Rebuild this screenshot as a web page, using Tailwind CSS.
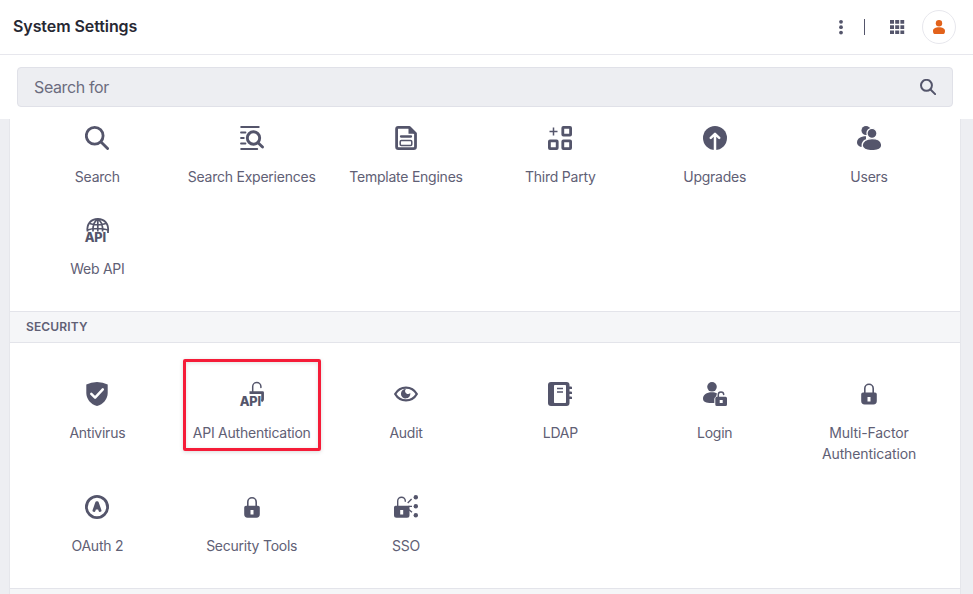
<!DOCTYPE html>
<html lang="en">
<head>
<meta charset="utf-8">
<title>System Settings</title>
<script src="https://cdn.jsdelivr.net/npm/@tailwindcss/browser@4"></script>
</head>
<body class="flex h-[594px] w-[973px] flex-col overflow-hidden bg-white font-['Inter',sans-serif] text-[#54556b]">
<header class="flex h-[55px] shrink-0 items-center border-b border-[#e7e7ed] pr-[17px] pl-[13px]">
  <h1 class="flex-1 pb-[3px] text-[16px] font-semibold tracking-[-0.08px] text-[#272833]">System Settings</h1>
  <svg class="h-4 w-4" viewBox="0 0 16 16" fill="currentColor"><circle cx="8" cy="2.8" r="1.9"/><circle cx="8" cy="8.2" r="1.9"/><circle cx="8" cy="13.6" r="1.9"/></svg>
  <div class="ml-[15px] h-4 w-px bg-[#54556b]"></div>
  <svg class="ml-6 h-4 w-4" viewBox="0 0 16 16" fill="currentColor"><path d="M1 1h4v3.7H1zM6.2 1h4v3.7h-4zM11.4 1h3.8v3.7h-3.8zM1 6.2h4v3.7H1zM6.2 6.2h4v3.7h-4zM11.4 6.2h3.8v3.7h-3.8zM1 11.4h4V15H1zM6.2 11.4h4V15h-4zM11.4 11.4h3.8V15h-3.8z"/></svg>
  <div class="ml-[17px] flex h-[34px] w-[34px] items-center justify-center rounded-full border border-[#e7e7ed]">
    <svg class="h-4 w-4" viewBox="0 0 16 16" fill="#e2621b"><circle cx="8" cy="4.2" r="3.2"/><path d="M2 11.8C2 9.6 4.6 8.2 8 8.2s6 1.4 6 3.6c0 1.8-.4 3.2-1.6 3.2H3.600C2.400 15 2 13.600 2 11.800z"/></svg>
  </div>
</header>
<div class="h-16 shrink-0 px-[17px] pr-5 pt-3">
  <div class="flex h-10 items-center rounded-[4px] border border-[#e0e1e8] bg-[#edeef2] pr-4 pl-4">
    <span class="flex-1 text-[16px] tracking-[-0.38px] text-[#6b6c7e]">Search for</span>
    <svg class="h-4 w-4" viewBox="0 0 24 24" fill="none" stroke="currentColor" stroke-width="3" stroke-linecap="round"><circle cx="9.700" cy="9.500" r="8.200"/><path d="M15.700 15.700l7 7"/></svg>
  </div>
</div>
<main class="flex min-h-0 flex-1 bg-[#edeef2] pr-3 pl-[9px]">
  <div class="w-[952px] shrink-0 border-x border-[#e5e6eb] bg-white text-[14px] leading-[21px] tracking-[-0.24px] text-[#5f6075]">
    <section class="grid h-[192px] grid-cols-6 content-start gap-y-[31px] pr-[13.8px] pl-[10.2px] pt-[7px] text-center">
      <div class="flex flex-col items-center gap-4">
        <svg class="h-6 w-6 text-[#54556b]" viewBox="0 0 24 24" fill="none" stroke="currentColor" stroke-width="2.800" stroke-linecap="round"><circle cx="9.700" cy="9.800" r="8.400"/><path d="M16 16l6.600 6.600"/></svg>
        <span>Search</span>
      </div>
      <div class="flex flex-col items-center gap-4">
        <svg class="h-6 w-6 text-[#54556b]" viewBox="0 0 24 24" fill="none" stroke="currentColor" stroke-linecap="round"><path stroke-width="2" d="M1.200 1.100h17.500M1.200 23h16"/><path stroke-width="1.800" d="M1 6.500h4.500M1 12h2.800M1 17.500h4.500"/><circle cx="13.500" cy="12" r="6.200" stroke-width="2.900"/><path stroke-width="2.900" d="M18.300 17l4.200 4"/></svg>
        <span>Search Experiences</span>
      </div>
      <div class="flex flex-col items-center gap-4">
        <svg class="h-6 w-6 text-[#54556b]" viewBox="0 0 24 24" fill="none" stroke="currentColor"><path stroke-width="2.800" stroke-linejoin="round" d="M4 1.400h11.500l6 6V20.800a1.800 1.800 0 0 1-1.800 1.800H4.400a1.800 1.800 0 0 1-1.800-1.800V3a1.600 1.600 0 0 1 1.600-1.600z"/><path fill="currentColor" stroke="none" d="M14.500 1v6.800h7.500z"/><path stroke-width="2.300" stroke-linecap="round" d="M7 10.500h10"/><rect x="6.200" y="14.500" width="11.600" height="5" rx="1.200" stroke-width="1.500"/></svg>
        <span>Template Engines</span>
      </div>
      <div class="flex flex-col items-center gap-4">
        <svg class="h-6 w-6 text-[#54556b]" viewBox="0 0 24 24" fill="none" stroke="currentColor" stroke-width="2.800"><path stroke-width="1.500" d="M5.500 1.500v8M1.500 5.500h8"/><rect x="14.800" y="1.400" width="7.800" height="7.800" rx=".6"/><rect x="1.400" y="14.800" width="7.800" height="7.800" rx=".6"/><rect x="14.800" y="14.800" width="7.800" height="7.800" rx=".6"/></svg>
        <span>Third Party</span>
      </div>
      <div class="flex flex-col items-center gap-4">
        <svg class="h-6 w-6 text-[#54556b]" viewBox="0 0 24 24"><circle cx="12" cy="12" r="12" fill="currentColor"/><path d="M12 24V9M7.800 11.800L12 7.900l4.200 3.900" fill="none" stroke="#fff" stroke-width="2.500" stroke-linecap="round" stroke-linejoin="round"/></svg>
        <span>Upgrades</span>
      </div>
      <div class="flex flex-col items-center gap-4">
        <svg class="h-6 w-6 text-[#54556b]" viewBox="0 0 24 24" fill="currentColor"><circle cx="9" cy="4.500" r="4.500"/><path d="M0 16.500C0 12.800 3.500 10.300 9 10.300v8L4 21C1.500 20 0 18.600 0 16.500z"/><circle cx="15" cy="7.300" r="5" stroke="#fff" stroke-width="1.300"/><path stroke="#fff" stroke-width="1.300" d="M5.200 19.300c0-4.300 4.300-6.700 9.800-6.700s9.700 2.400 9.700 6.700c0 3.800-4 5.400-9.700 5.400s-9.800-1.600-9.800-5.400z"/></svg>
        <span>Users</span>
      </div>
      <div class="flex flex-col items-center gap-4">
        <svg class="h-6 w-6 overflow-visible text-[#54556b]" viewBox="0 0 24 24" fill="none" stroke="currentColor" stroke-width="1.700"><path stroke-width="1.800" d="M2.500 13.500C1.500 6 6 1 12.800 1S24 6 23 13.500V15"/><path d="M12.800 1v12.500M8 13.500C7.500 7 9.500 3 12.800 1c3.300 2 5.300 6 4.800 12.500M4.500 5.500c5 1.500 11.500 1.500 16.500 0M2.500 12c5-2 15.500-2 20.500 0"/><path d="M0 14.300h20.500V24H0z" fill="#fff" stroke="none"/><text x="-.2" y="23.900" font-family="Inter, sans-serif" font-size="12.500" font-weight="800" textLength="21" lengthAdjust="spacingAndGlyphs" fill="currentColor" stroke="none">API</text></svg>
        <span>Web API</span>
      </div>
    </section>
    <h2 class="flex h-8 items-center border-y border-[#e3e4ea] bg-[#f5f6f8] pb-[2px] pl-4 text-[12px] font-semibold tracking-[0.14px] text-[#5f6075]">SECURITY</h2>
    <section class="grid h-[245px] grid-cols-6 content-start gap-y-[31px] pr-[13.8px] pl-[10.2px] pt-[39px] text-center">
      <div class="flex flex-col items-center gap-4">
        <svg class="h-6 w-6 text-[#54556b]" viewBox="0 0 24 24"><path fill="currentColor" d="M1.300 2.600Q6 .1 12 .1t10.700 2.500V11c0 6-4.500 11.500-10.700 13C5.800 22.500 1.300 17 1.300 11z"/><path d="M6.300 11.800l3.800 3.800 7.700-8.300" fill="none" stroke="#fff" stroke-width="2.500" stroke-linecap="round" stroke-linejoin="round"/></svg>
        <span>Antivirus</span>
      </div>
      <div class="relative flex flex-col items-center gap-4">
        <div class="absolute -top-[23px] left-[8.500px] h-[92px] w-[138px] rounded-[2px] border-[3px] border-[#f51c38] shadow-[0_1px_4px_rgba(0,0,0,0.15),inset_0_1px_4px_rgba(0,0,0,0.12)]"></div>
        <svg class="h-6 w-6 overflow-visible text-[#54556b]" viewBox="0 0 24 24" fill="none" stroke="currentColor"><path stroke-width="1.500" stroke-linecap="round" d="M12.700 9.500V4.600a4.100 4.100 0 0 1 8.200 0v1"/><path stroke-width="2.700" stroke-linejoin="round" d="M9.500 10.600h13.100v7q0 .9-1.300 1.500"/><path d="M0 14.300h20.600V24H0z" fill="#fff" stroke="none"/><text x="-.2" y="23.900" font-family="Inter, sans-serif" font-size="12.500" font-weight="800" textLength="21" lengthAdjust="spacingAndGlyphs" fill="currentColor" stroke="none">API</text></svg>
        <span>API Authentication</span>
      </div>
      <div class="flex flex-col items-center gap-4">
        <svg class="h-6 w-6 text-[#54556b]" viewBox="0 0 24 24"><path fill="none" stroke="currentColor" stroke-width="2.300" stroke-linejoin="round" d="M1.200 12C3.500 8 7.500 5.600 12 5.600S20.500 8 22.800 12c-2.300 4-6.300 6.400-10.800 6.400S3.500 16 1.200 12z"/><path fill="currentColor" d="M12 7a2.900 2.900 0 0 0 4.300 4 4.700 4.700 0 1 1-4.300-4z"/></svg>
        <span>Audit</span>
      </div>
      <div class="flex flex-col items-center gap-4">
        <svg class="h-6 w-6 text-[#54556b]" viewBox="0 0 24 24"><rect x="0" y="0" width="21.500" height="24" rx="3" fill="currentColor"/><path fill="currentColor" d="M21 4.500h2a1 1 0 0 1 1 1V7h-3zM21 9.500h2a1 1 0 0 1 1 1V12h-3zM21 14.500h2a1 1 0 0 1 1 1V17h-3z"/><rect x="6" y="3" width="12" height="18" rx=".7" fill="#fff"/><path d="M9 6.500h6M9 10h6" stroke="currentColor" stroke-width="1.400"/></svg>
        <span>LDAP</span>
      </div>
      <div class="flex flex-col items-center gap-4">
        <svg class="h-6 w-6 text-[#54556b]" viewBox="0 0 24 24" fill="currentColor"><circle cx="9" cy="4.800" r="4.800"/><path d="M0 16.500c0-3.800 3.500-6.300 9-6.300 2 0 3.800.4 5 1.200-.5 1-.7 2-.7 2.800-1.500.7-2 2-2 3.500V21C4.500 21.500 0 20.500 0 16.500z"/><path fill="none" stroke="currentColor" stroke-width="1.500" stroke-linecap="round" d="M15.300 15v-2.400a2.700 2.700 0 0 1 5.400 0"/><path fill-rule="evenodd" d="M13.800 14.700h8.700A1.500 1.500 0 0 1 24 16.200v6.300a1.500 1.500 0 0 1-1.500 1.500h-8.700a1.500 1.500 0 0 1-1.500-1.500v-6.300a1.500 1.500 0 0 1 1.500-1.500zM16.700 18v3h3v-3z"/></svg>
        <span>Login</span>
      </div>
      <div class="flex flex-col items-center gap-4">
        <svg class="h-6 w-6 text-[#54556b]" viewBox="0 0 24 24"><path d="M7.800 11V6.500a4.200 4.200 0 0 1 8.400 0V11" fill="none" stroke="currentColor" stroke-width="1.600"/><path fill="currentColor" fill-rule="evenodd" d="M6 10.500h12a1.800 1.800 0 0 1 1.800 1.800V19a3.400 3.400 0 0 1-3.400 3.400H7.600A3.400 3.400 0 0 1 4.200 19v-6.700A1.800 1.800 0 0 1 6 10.500zM10.500 15v4.500h3V15z"/></svg>
        <span class="w-[120px] tracking-[-0.12px]">Multi-Factor Authentication</span>
      </div>
      <div class="flex flex-col items-center gap-4">
        <svg class="h-6 w-6 text-[#54556b]" viewBox="0 0 24 24"><circle cx="12" cy="12" r="10.600" fill="none" stroke="currentColor" stroke-width="2.800"/><path d="M9 15.500L11.700 7.600h.6L15 15.500M10.200 13h3.600" fill="none" stroke="currentColor" stroke-width="2.900" stroke-linecap="round" stroke-linejoin="round"/></svg>
        <span>OAuth 2</span>
      </div>
      <div class="flex flex-col items-center gap-4">
        <svg class="h-6 w-6 text-[#54556b]" viewBox="0 0 24 24"><path d="M7.800 11.500V7a4.200 4.200 0 0 1 8.400 0v4.500" fill="none" stroke="currentColor" stroke-width="1.600"/><path fill="currentColor" fill-rule="evenodd" d="M6 10.700h12a1.800 1.800 0 0 1 1.800 1.800V19.300a3.400 3.400 0 0 1-3.400 3.400H7.600a3.400 3.400 0 0 1-3.400-3.400v-6.800A1.800 1.800 0 0 1 6 10.700zM10.500 15v4.500h3V15z"/></svg>
        <span>Security Tools</span>
      </div>
      <div class="flex flex-col items-center gap-4">
        <svg class="h-6 w-6 text-[#54556b]" viewBox="0 0 24 24" fill="currentColor"><path d="M3.700 11.500V6a3.800 3.800 0 0 1 7.600 0v.8M13.700 8L17.600 4.100M14.500 11.400H18M15 14.700l3 2.500" fill="none" stroke="currentColor" stroke-width="1.400"/><path fill-rule="evenodd" d="M1.500 10.700h14v9.600a2.500 2.500 0 0 1-2.500 2.500H2.500A2.500 2.500 0 0 1 0 20.300v-8a1.600 1.600 0 0 1 1.500-1.600zM6.200 15v4.500h3V15z"/><circle cx="21.800" cy="2.300" r="2.200"/><circle cx="21.800" cy="11.300" r="2.200"/><circle cx="21.800" cy="20.300" r="2.200"/></svg>
        <span>SSO</span>
      </div>
    </section>
    <div class="h-8 border-y border-[#e3e4ea] bg-[#f5f6f8]"></div>
  </div>
</main>
</body>
</html>
